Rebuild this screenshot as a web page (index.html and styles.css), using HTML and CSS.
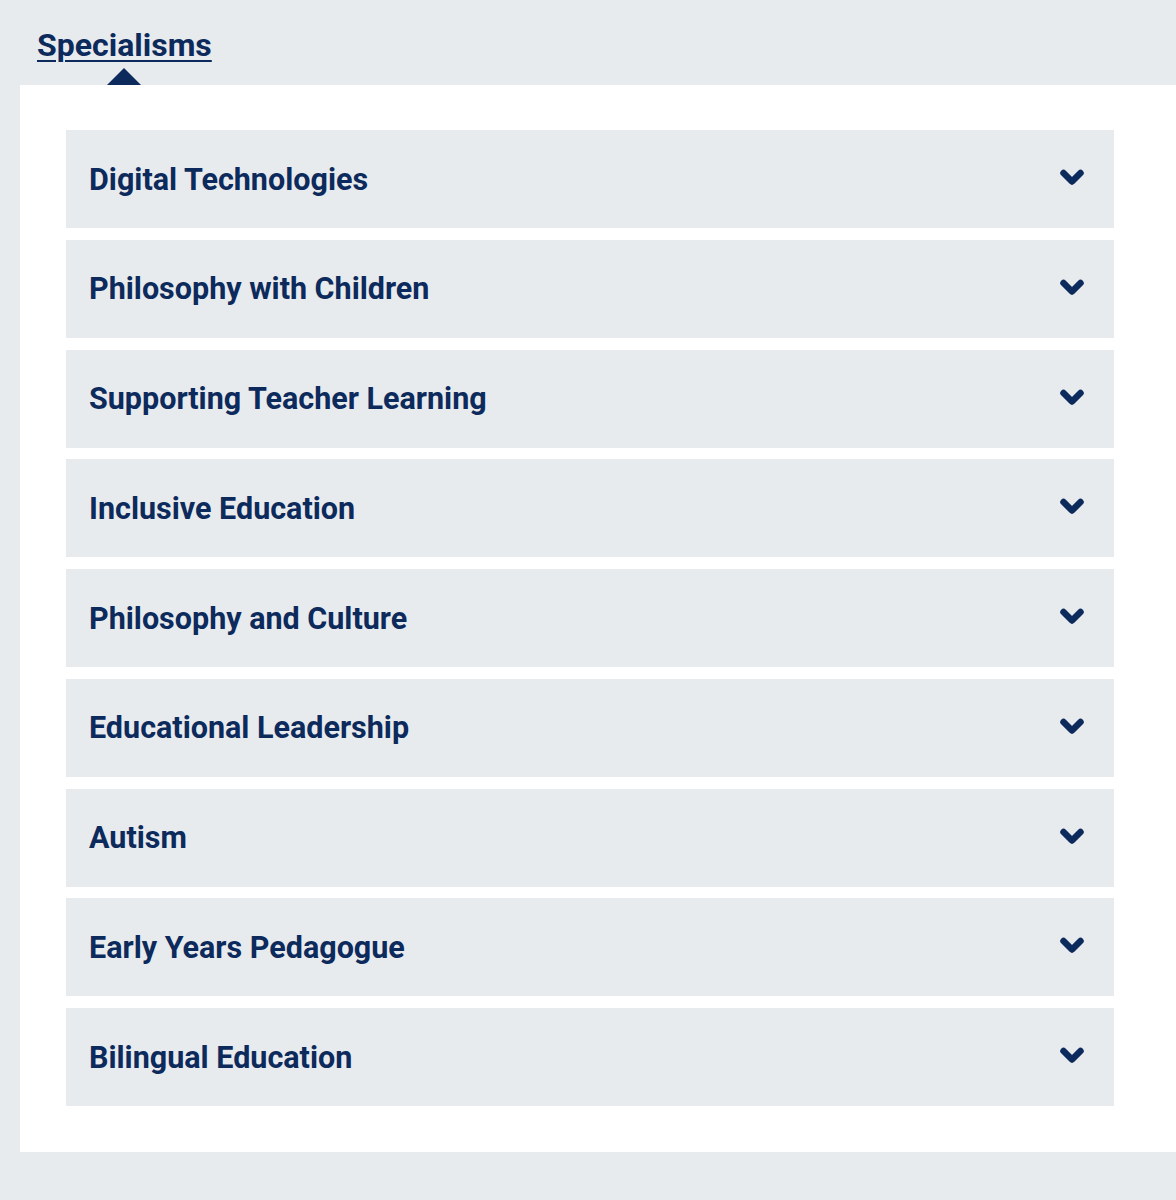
FILE: index.html
```html
<!DOCTYPE html>
<html>
<head>
<meta charset="utf-8">
<link rel="stylesheet" href="styles.css">
</head>
<body>
<div class="page">
  <div class="tabs">
    <a class="tab" href="#">Specialisms</a>
  </div>
  <div class="panel">
    <div class="list">
      <div class="item"><span>Digital Technologies</span><svg class="chev" viewBox="0 0 24 18"><path d="M3.5 4 L12 12.5 L20.5 4"/></svg></div>
      <div class="item"><span>Philosophy with Children</span><svg class="chev" viewBox="0 0 24 18"><path d="M3.5 4 L12 12.5 L20.5 4"/></svg></div>
      <div class="item"><span>Supporting Teacher Learning</span><svg class="chev" viewBox="0 0 24 18"><path d="M3.5 4 L12 12.5 L20.5 4"/></svg></div>
      <div class="item"><span>Inclusive Education</span><svg class="chev" viewBox="0 0 24 18"><path d="M3.5 4 L12 12.5 L20.5 4"/></svg></div>
      <div class="item"><span>Philosophy and Culture</span><svg class="chev" viewBox="0 0 24 18"><path d="M3.5 4 L12 12.5 L20.5 4"/></svg></div>
      <div class="item"><span>Educational Leadership</span><svg class="chev" viewBox="0 0 24 18"><path d="M3.5 4 L12 12.5 L20.5 4"/></svg></div>
      <div class="item"><span>Autism</span><svg class="chev" viewBox="0 0 24 18"><path d="M3.5 4 L12 12.5 L20.5 4"/></svg></div>
      <div class="item"><span>Early Years Pedagogue</span><svg class="chev" viewBox="0 0 24 18"><path d="M3.5 4 L12 12.5 L20.5 4"/></svg></div>
      <div class="item"><span>Bilingual Education</span><svg class="chev" viewBox="0 0 24 18"><path d="M3.5 4 L12 12.5 L20.5 4"/></svg></div>
    </div>
  </div>
</div>
</body>
</html>
```
FILE: styles.css
```css
html, body {
  margin: 0;
  padding: 0;
  background: #e8ebee;
}
body {
  font-family: Roboto, "Liberation Sans", sans-serif;
  color: #0c2a5b;
}
.page {
  padding-left: 20px;
  height: 1200px;
  box-sizing: border-box;
}
.tabs {
  height: 85px;
  box-sizing: border-box;
  padding-top: 23px;
  padding-left: 17px;
}
.tab {
  position: relative;
  display: inline-block;
  font-size: 32px;
  font-weight: 700;
  line-height: 44px;
  color: #0c2a5b;
  text-decoration: underline;
  text-decoration-thickness: 2px;
  text-underline-offset: 4px;
}
.tab::after {
  content: "";
  position: absolute;
  left: 50%;
  margin-left: -17px;
  bottom: -18px;
  width: 0;
  height: 0;
  border-left: 17px solid transparent;
  border-right: 17px solid transparent;
  border-bottom: 17px solid #0c2a5b;
}
.panel {
  background: #ffffff;
  padding: 45px 62px 46px 46px;
}
.list {
  display: flex;
  flex-direction: column;
  gap: 11.75px;
}
.item {
  height: 98px;
  background: #e8ebee;
  display: flex;
  align-items: center;
  justify-content: space-between;
  padding: 0 30px 0 23px;
  font-size: 30.5px;
  font-weight: 700;
}
.chev {
  width: 24px;
  height: 18px;
  margin-top: -2px;
}
.chev path {
  fill: none;
  stroke: #0c2a5b;
  stroke-width: 6.5;
  stroke-linecap: round;
  stroke-linejoin: round;
}
```
